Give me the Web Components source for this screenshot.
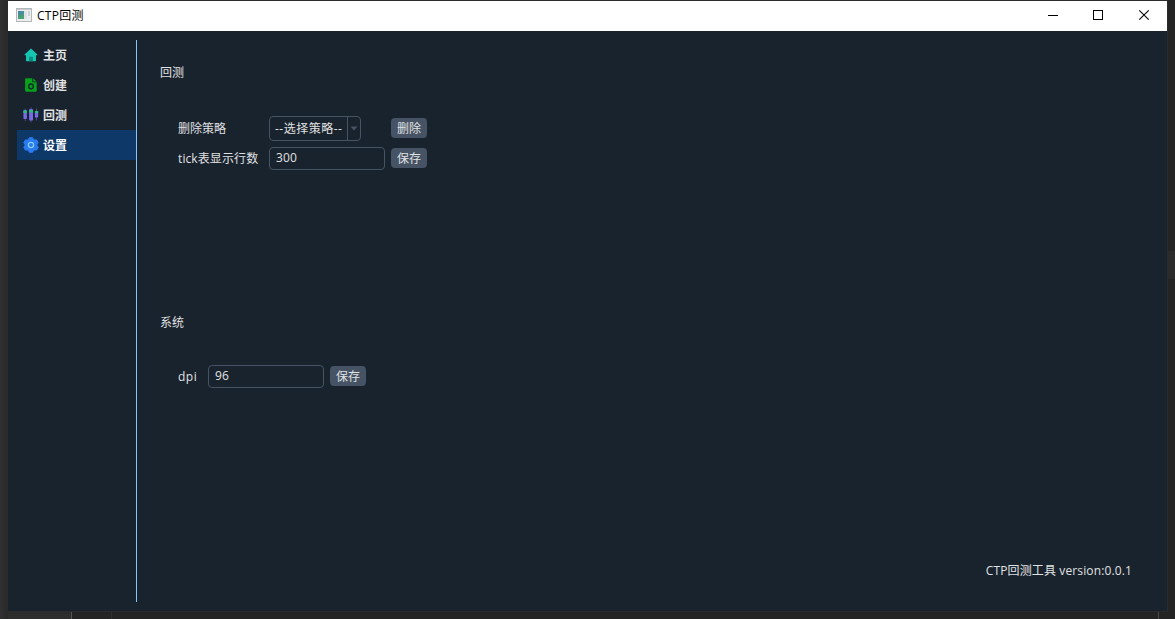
<!DOCTYPE html>
<html lang="zh-CN">
<head>
<meta charset="utf-8">
<title>CTP回测</title>
<style>
html,body{margin:0;height:100%;overflow:hidden}
body{font:12px/16px "Open Sans","Noto Sans CJK SC",sans-serif;color:#e0e1e3;background:#262626}
</style>
</head>
<body>
<ctp-desktop>
  <ctp-window>
    <ctp-titlebar slot="title">CTP回测</ctp-titlebar>
    <ctp-sidebar slot="nav">
      <ctp-nav-item icon="home">主页</ctp-nav-item>
      <ctp-nav-item icon="create">创建</ctp-nav-item>
      <ctp-nav-item icon="chart">回测</ctp-nav-item>
      <ctp-nav-item icon="gear" selected>设置</ctp-nav-item>
    </ctp-sidebar>
    <ctp-settings></ctp-settings>
  </ctp-window>
</ctp-desktop>
<script>
const define = (name, html, setup) => customElements.define(name, class extends HTMLElement {
  constructor() {
    super();
    this.attachShadow({mode: 'open'}).innerHTML = html;
  }
  connectedCallback() { if (setup) setup(this, this.shadowRoot); }
});

const icons = {
  home: `<path fill="#16c5b1" d="M8 1.600 14.200 7.200c.5.5.2 1.100-.4 1.100H13v4.900c0 .6-.4 1-1 1H4c-.6 0-1-.4-1-1V8.300H2.200c-.6 0-.9-.6-.4-1.100z"/><path fill="#0c8a7e" d="M6 14.200V10.600c0-.6.3-.9.9-.9h2.200c.6 0 .9.3.9.9v3.600z"/>`,
  create: `<path fill="#09a01c" d="M3.200 1.200H9.300V5.200h4.400v8.400c0 .7-.4 1.100-1.100 1.100H3.200c-.7 0-1.100-.4-1.100-1.100V2.300c0-.7.4-1.100 1.100-1.100z"/><path fill="#09a01c" d="M10.200 1.400 13.700 4.600H10.200z"/><circle cx="8" cy="9.400" r="2.300" fill="none" stroke="#133229" stroke-width="1.500"/><path d="M8 6.300v1M8 11.500v1M5.300 7.900l.8.400M9.900 10.500l.8.400M5.300 10.900l.8-.4M9.900 8.300l.8-.4" stroke="#133229"/>`,
  chart: `<path stroke="#4b4790" d="M2.300 1.500v12.500M8 .2v15.300M13.500 1.500v12"/><rect x=".4" y="3" width="3.500" height="9" rx=".8" fill="#766be5"/><rect x="6.100" y="2" width="3.900" height="11.500" rx=".8" fill="#766be5"/><rect x="11.900" y="4" width="3.300" height="6.500" rx=".8" fill="#766be5"/><path fill="#25bc80" d="M.4 3.500h3.500v2.500H.4zM6.100 3h3.900v2.500H6.100zM11.900 4h3.300v2h-3.300z"/>`,
  gear: `<path fill="#2b7af0" stroke="#2b7af0" stroke-width="1" stroke-linejoin="round" d="M6.400.7h3.200l1.300 2.300 2.700-.1 1.600 2.800L13.700 8l1.500 2.300-1.600 2.800-2.700-.1-1.300 2.300H6.400L5.100 13l-2.700.1-1.600-2.800L2.300 8 .8 5.700l1.600-2.800 2.700.1z"/><circle cx="8" cy="8" r="2.600" fill="#2b7af0" stroke="#83d1ff" stroke-width="1.200"/>`
};

define('ctp-desktop', `<style>
:host{display:grid;box-sizing:border-box;width:1175px;height:619px;padding:1px 8px 8px;
background:linear-gradient(#555,#555) 71px 611px/1px 8px no-repeat,linear-gradient(#303030,#303030) 111px 611px/1px 8px no-repeat,linear-gradient(#4a4a4a,#4a4a4a) 1158px 611px/1px 8px no-repeat,linear-gradient(#2b2b2b,#2b2b2b) 1167px 251px/8px 28px no-repeat,linear-gradient(90deg,#313131,#292929) 0 0/8px 619px no-repeat,linear-gradient(#2b2b2b,#2e2e2e) 0 611px/71px 8px no-repeat,#242424}
</style><slot></slot>`);

define('ctp-window', `<style>
:host{display:flex;flex-direction:column;background:#19232d;box-shadow:0 0 0 1px #2a2b2b}
.body{flex:1;display:flex;padding:9px;min-height:0}
</style><slot name="title"></slot><div class="body"><slot name="nav"></slot><slot></slot></div>`);

define('ctp-titlebar', `<style>
:host{display:flex;align-items:center;height:30px;background:#fff;color:#000}
.logo{margin:0 5px 2px 8px;display:block}
.t{flex:1;white-space:nowrap;letter-spacing:.25px}
.ctl{display:block}
</style>
<svg class="logo" width="16" height="14" viewBox="0 0 16 14"><defs><linearGradient id="g" x2=".4" y2="1"><stop stop-color="#4a7fb5"/><stop offset="1" stop-color="#4aa56c"/></linearGradient></defs><rect x=".5" y=".5" width="15" height="13" fill="#eceeef" stroke="#b4b8bb"/><path stroke="#c7cbd0" d="M1 1.500h14"/><rect x="2" y="3" width="6" height="8" fill="url(#g)"/><rect x="8" y="3" width="3" height="8" fill="#dde3e5"/><rect x="12" y="3" width="2" height="5" fill="#c9d3d6"/></svg>
<span class="t"><slot></slot></span>
<svg class="ctl" width="138" height="30" viewBox="0 0 138 30" fill="none" stroke="#000"><path d="M19 14.500h10M64.500 9.500h9v9h-9z" shape-rendering="crispEdges"/><path d="m110.300 9.300 9.400 9.400M119.700 9.300l-9.400 9.400" stroke-width="1.100"/></svg>`);

define('ctp-sidebar', `<style>
:host{display:flex;flex-direction:column;width:119px;border-right:1px solid #8ac4ff}
</style><slot></slot>`);

define('ctp-nav-item', `<style>
:host{display:flex;align-items:center;height:30px;padding-left:6px;gap:4px;font-weight:700;color:#e0e1e3}
:host([selected]){background:#0d3868;color:#fff}
svg{display:block}
span{padding-top:2px}
</style><svg width="16" height="16" viewBox="0 0 16 16"></svg><span><slot></slot></span>`,
(el, root) => { root.querySelector('svg').innerHTML = icons[el.getAttribute('icon')]; });

define('ctp-button', `<style>
:host{display:block;box-sizing:border-box;padding-top:3px;text-align:center;width:36px;height:20px;border-radius:4px;background:#455364;white-space:nowrap}
</style><slot></slot>`);

define('ctp-input', `<style>
:host{display:block;box-sizing:border-box;width:116px;height:23px;border:1px solid #455364;border-radius:4px;padding:2px 6px;letter-spacing:.2px}
</style><slot></slot>`);

define('ctp-select', `<style>
:host{display:flex;box-sizing:border-box;width:92px;height:25px;border:1px solid #455364;border-radius:4px;white-space:nowrap}
.v{width:72px;padding:4px 0 0 5px;letter-spacing:.5px}
.a{flex:1;border-left:1px solid #455364;display:grid;place-items:center}
svg{display:block}
</style><span class="v"><slot></slot></span><span class="a"><svg width="8" height="5" viewBox="0 0 8 5"><path fill="#455364" d="M.5.500h7L4 4.500z"/></svg></span>`);

define('ctp-section', `<style>
:host{display:block;white-space:nowrap}
.h{height:16px}
.c{padding:35px 0 0 18px}
</style><div class="h"><slot name="heading"></slot></div><div class="c"><slot></slot></div>`);

define('ctp-settings', `<style>
:host{flex:1;display:flex;flex-direction:column;padding:25px 26px 23px 23px}
.first{height:249px}
.rows{display:grid;grid-template-columns:91px 116px 36px;row-gap:6px;column-gap:0;align-items:center}
.rows ctp-button{margin:0 0 2px 6px}
.one{grid-template-columns:30px 116px 36px}
.ver{margin-top:auto;align-self:flex-end;letter-spacing:.13px}
.tick{letter-spacing:.1px}
.dpi{letter-spacing:.5px}
.sys{display:block;padding-top:1px;height:15px}
</style>
<ctp-section class="first"><span slot="heading">回测</span><div class="rows">
<span>删除策略</span><ctp-select>--选择策略--</ctp-select><ctp-button>删除</ctp-button>
<span class="tick">tick表显示行数</span><ctp-input>300</ctp-input><ctp-button>保存</ctp-button></div></ctp-section>
<ctp-section><span slot="heading" class="sys">系统</span><div class="rows one">
<span class="dpi">dpi</span><ctp-input>96</ctp-input><ctp-button>保存</ctp-button></div></ctp-section>
<div class="ver">CTP回测工具 version:0.0.1</div>`);
</script>
</body>
</html>
